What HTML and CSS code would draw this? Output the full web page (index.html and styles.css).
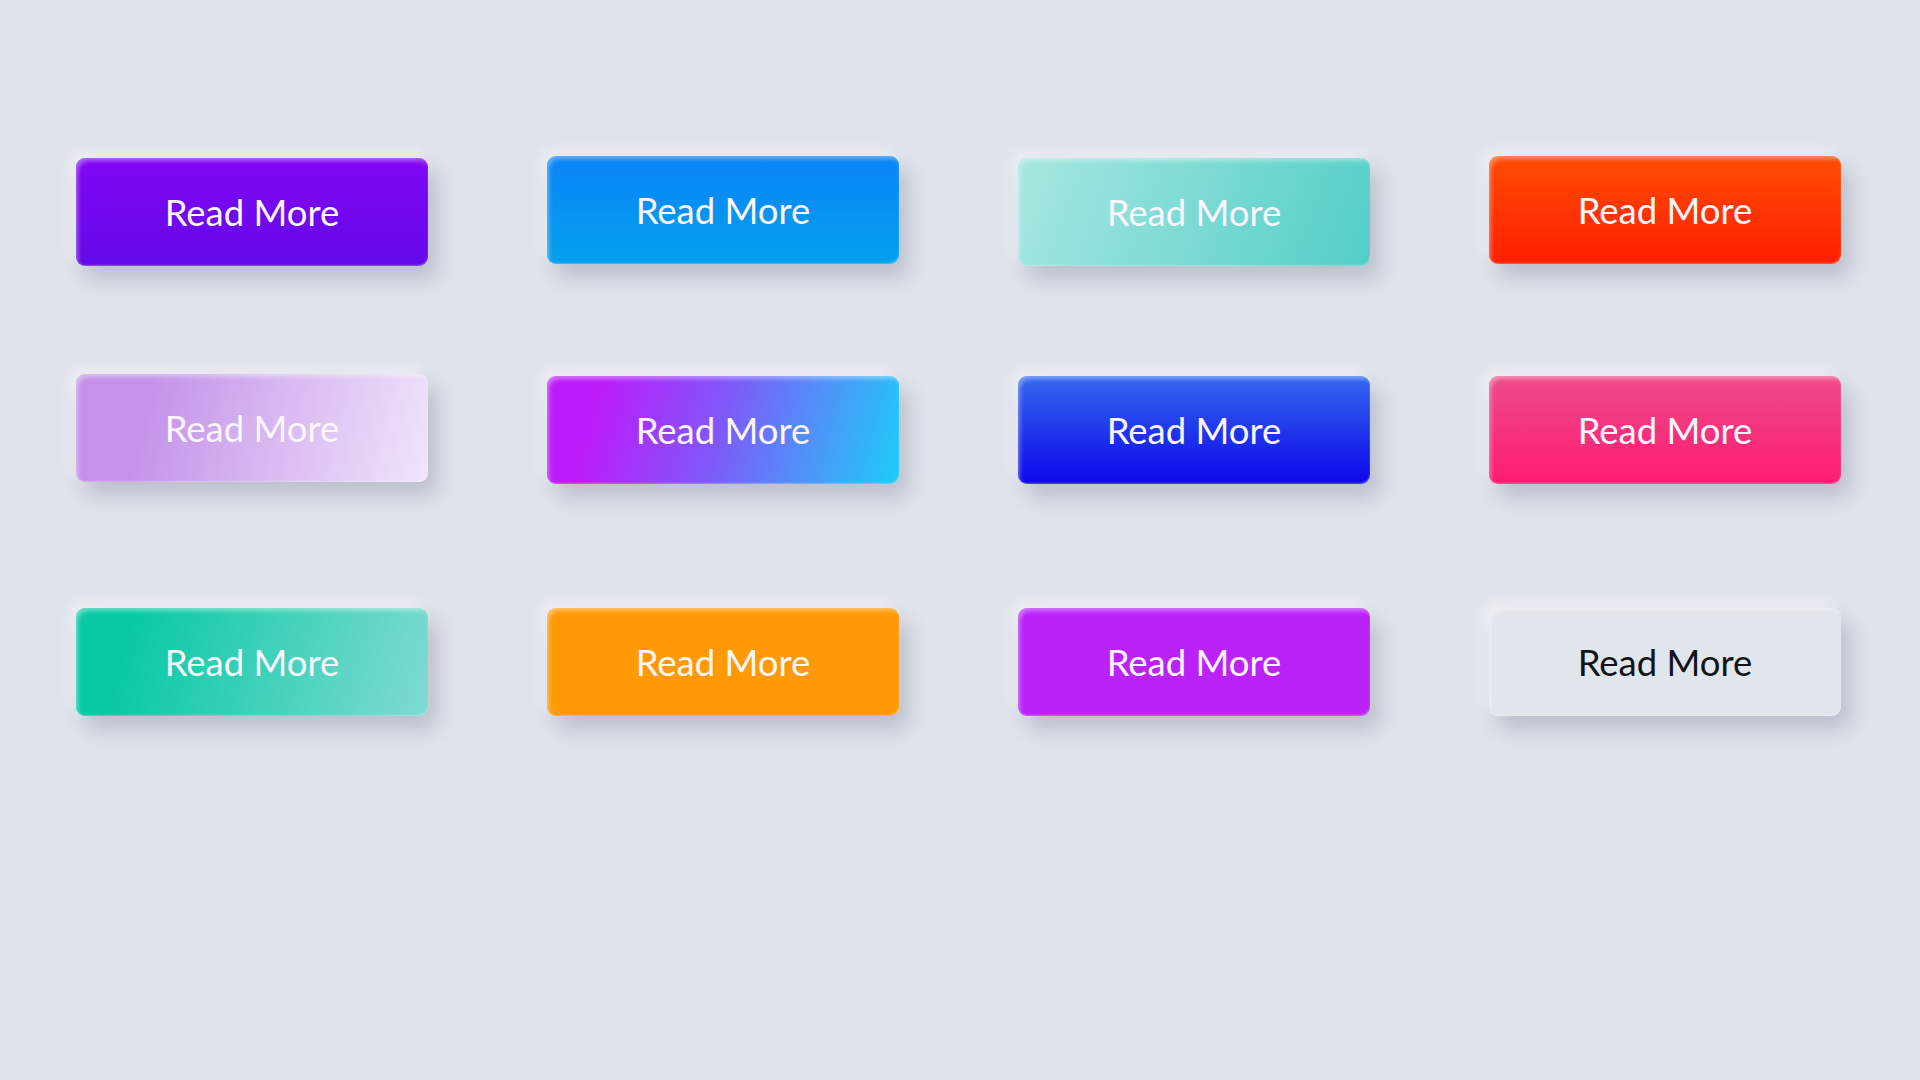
FILE: index.html
```html
<!DOCTYPE html>
<html lang="en">
<head>
<meta charset="utf-8">
<title>Read More Buttons</title>
<link rel="stylesheet" href="styles.css">
</head>
<body>
<main class="board">
  <div class="row row-1">
    <a class="btn b1" href="#">Read More</a>
    <a class="btn b2 up" href="#">Read More</a>
    <a class="btn b3" href="#">Read More</a>
    <a class="btn b4 up" href="#">Read More</a>
  </div>
  <div class="row row-2">
    <a class="btn b5 up" href="#">Read More</a>
    <a class="btn b6" href="#">Read More</a>
    <a class="btn b7" href="#">Read More</a>
    <a class="btn b8" href="#">Read More</a>
  </div>
  <div class="row row-3">
    <a class="btn b9" href="#">Read More</a>
    <a class="btn b10" href="#">Read More</a>
    <a class="btn b11" href="#">Read More</a>
    <a class="btn b12" href="#">Read More</a>
  </div>
</main>
</body>
</html>
```
FILE: styles.css
```css
html, body {
  margin: 0;
  padding: 0;
  height: 100%;
}
body {
  background: #dfe3eb;
  font-family: Lato, "Open Sans", "Liberation Sans", sans-serif;
  overflow: hidden;
}
.board {
  display: flex;
  flex-direction: column;
  padding: 158px 0 0 76px;
}
.row {
  display: flex;
  gap: 119px;
  align-items: flex-start;
}
.row-1 { margin-bottom: 110px; }
.row-2 { margin-bottom: 124px; }
.btn {
  box-sizing: border-box;
  width: 352px;
  height: 108px;
  border-radius: 9px;
  display: flex;
  align-items: center;
  justify-content: center;
  font-size: 36.5px;
  color: #fbf6ff;
  text-decoration: none;
  box-shadow:
    9px 13px 20px rgba(40, 55, 80, 0.2),
    -6px -6px 14px rgba(255, 255, 255, 0.45),
    inset 3px 4px 4px -1px rgba(255, 255, 255, 0.38),
    inset -1px -2px 2px -1px rgba(255, 255, 255, 0.3);
}
.up { margin-top: -2px; }
.b1 { background: linear-gradient(180deg, #8106f4, #6309ea); }
.b2 { background: linear-gradient(180deg, #0a84f8, #03a0ec); }
.b3 { background: linear-gradient(110deg, #a2e6df 5%, #52cec7 100%); }
.b4 { background: linear-gradient(180deg, #ff4d05, #ff1e00); }
.b5 { background: linear-gradient(105deg, #c492e9 20%, #f0e6fb 100%); }
.b6 { background: linear-gradient(105deg, #bc1cfb 15%, #7d5bf8 50%, #4d95f8 75%, #1ccdf6 100%); }
.b7 { background: linear-gradient(180deg, #3369ee, #0d05ea); }
.b8 { background: linear-gradient(180deg, #ec4b89, #ff1b71); }
.b9 { background: linear-gradient(105deg, #08c9a4 15%, #80dad2 100%); }
.b10 { background: #ff9a05; }
.b11 { background: #ba22f8; }
.b12 {
  background: #e1e5ec;
  color: #111418;
}
```
